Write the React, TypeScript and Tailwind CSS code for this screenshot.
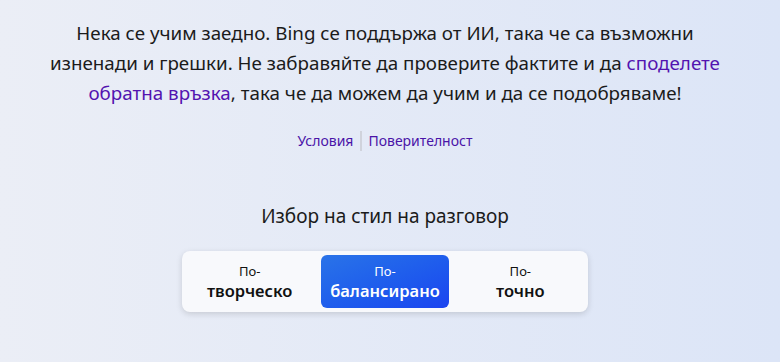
import React from 'react';

const styles = [
  { top: 'По-', main: 'творческо' },
  { top: 'По-', main: 'балансирано' },
  { top: 'По-', main: 'точно' },
];

const App = () => {
  const active = 1;

  return (
    <div
      className="min-h-[362px] w-full bg-gradient-to-r from-[#ebeef6] to-[#dce5f7] pr-[10px] text-[#111] flex flex-col items-center"
      style={{ fontFamily: '"Noto Sans", "Open Sans", sans-serif' }}
    >
      <p className="w-[710px] pt-[18px] text-center text-[18.8px] leading-[30px] text-[#1b1b1b]">
        Нека се учим заедно. Bing се поддържа от ИИ, така че са възможни
        <br />
        изненади и грешки. Не забравяйте да проверите фактите и да{' '}
        <a className="text-[#5314b0]">споделете</a>
        <br />
        <a className="text-[#5314b0]">обратна връзка</a>, така че да можем да учим и да се
        подобряваме!
      </p>

      <div className="mt-[23px] flex items-center text-[14px] leading-[20px] text-[#4a14a8]">
        <a className="pr-[7px]">Условия</a>
        <span className="h-[20px] w-[2px] bg-[#d0d3dc]" />
        <a className="pl-[6px]">Поверителност</a>
      </div>

      <h2 className="mt-[53px] text-[19px] leading-[24px] text-[#1b1b1b]">
        Избор на стил на разговор
      </h2>

      <div className="mt-[23px] grid w-[406px] grid-cols-3 gap-2 rounded-lg bg-[#f8f9fc] p-1 shadow-[0_2px_6px_rgba(0,0,0,0.14)]">
        {styles.map((s, i) => (
          <button
            key={s.main}
            className={`flex h-[53px] flex-col items-center justify-center rounded-md ${
              i === active
                ? 'bg-gradient-to-br from-[#2a73e8] to-[#1c43f0] text-white'
                : 'text-[#111]'
            }`}
          >
            <span className="text-[13px] leading-[18px]">{s.top}</span>
            <span className="text-[16.5px] font-semibold leading-[22px]">{s.main}</span>
          </button>
        ))}
      </div>
    </div>
  );
};

export default App;
